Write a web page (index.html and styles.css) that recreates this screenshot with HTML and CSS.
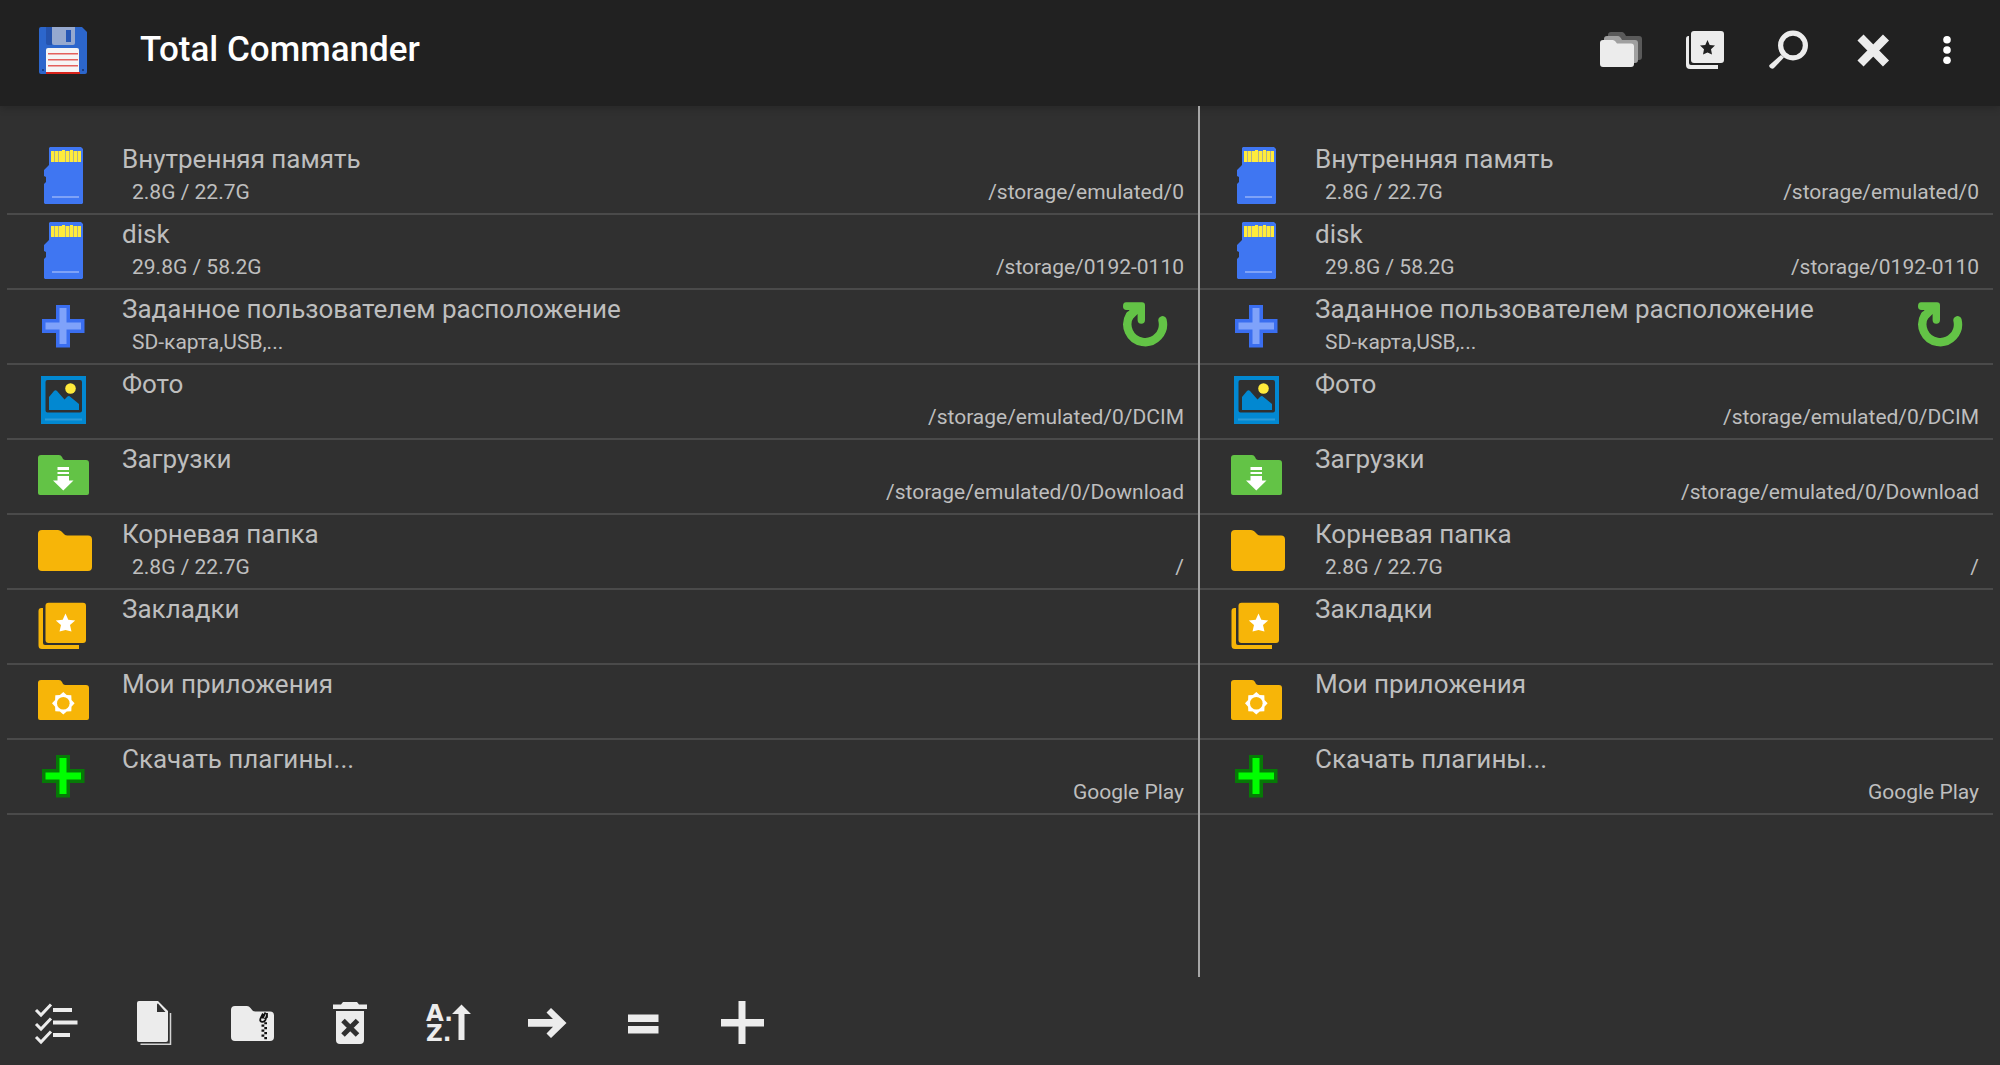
FILE: index.html
```html
<!DOCTYPE html>
<html lang="ru">
<head>
<meta charset="utf-8">
<meta name="viewport" content="width=device-width, initial-scale=1">
<title>Total Commander</title>
<link rel="stylesheet" href="styles.css">
</head>
<body>
<svg class="sprite" aria-hidden="true">
  <symbol id="i-sd" viewBox="0 0 60 73">
    <path fill="#3f76f2" d="M16 8l1-1h31l2 2v54l-1 1H12l-1-1V44l2-2v-5l-2-1v-6l5-5z"/>
    <path fill="#ffeb3b" d="M18 11h3v11h-3zM22 11h3v11h-3zM26 11h3v11h-3zM29 10h3v12h-3zM33 11h3v11h-3zM37 10h3v12h-3zM41 11h3v11h-3zM45 11h3v11h-3z"/>
    <path fill="#b2b38a" d="M21 11h1v11h-1zM25 11h1v11h-1zM32 11h1v11h-1zM36 11h1v11h-1zM40 11h1v11h-1zM44 11h1v11h-1z"/>
    <path fill="#7ea2f7" d="M19 56h27v2H19z"/>
  </symbol>
  <symbol id="i-plus" viewBox="0 0 60 73">
    <path fill="#3a6ef0" d="M23 15h14v14h14.500v14H37v14.500H23V43H9V29h14z"/>
    <path fill="#7fa2fa" d="M26.500 18h7v14.500H48v7H33.500V54h-7V39.500H12.500v-7h14z"/>
  </symbol>
  <symbol id="i-plugin" viewBox="0 0 60 73">
    <path fill="#067a06" d="M23 15h14v14h14.500v14H37v14.500H23V43H9V29h14z"/>
    <path fill="#00ff00" d="M26.500 18h7v14.500H48v7H33.500V54h-7V39.500H12.500v-7h14z"/>
  </symbol>
  <symbol id="i-photo" viewBox="0 0 60 73">
    <path fill="#0288d1" fill-rule="evenodd" d="M8 11h45v48H8zM14.500 15a2 2 0 0 0-2 2v28.500a2 2 0 0 0 2 2H47a2 2 0 0 0 2-2V17a2 2 0 0 0-2-2z"/>
    <path fill="#0288d1" d="M16 32l5-6q1.500-1.500 3 0l7.500 8.500 3-3q1.500-1 3 .5L46 39v6H16z"/>
    <circle cx="37.500" cy="23.500" r="5.300" fill="#ffeb3b"/>
    <path fill="#2d9bd8" d="M12 53.500h37v2H12z"/>
  </symbol>
  <symbol id="i-download" viewBox="0 0 60 73">
    <path fill="#63c346" d="M8 15h18q2 0 3 2l1 2q1 1 2.500 1H53q3 0 3 3v30q0 2-2 2H7q-2 0-2-2V18q0-3 3-3z"/>
    <path fill="#fff" d="M24.500 27H36v3H24.500zM24.500 32H36v2H24.500zM24.500 36H36v4.500h4.500L30.300 50.500 20 40.500h4.500z"/>
  </symbol>
  <symbol id="i-folder" viewBox="0 0 60 73">
    <path fill="#f7b508" d="M9 15h16q2 0 3.500 1.500l3 3q1 1 3 1H55q4 0 4 4V52q0 4-4 4H9q-4 0-4-4V19q0-4 4-4z"/>
  </symbol>
  <symbol id="i-marks" viewBox="0 0 60 73">
    <rect x="12.500" y="12.700" width="40.500" height="40.300" rx="3" fill="#f7b508"/>
    <path fill="#f7b508" d="M8.500 18H10v35q0 2 2 2h34v4H9q-3.500 0-3.500-3.500V21q0-3 3-3z"/>
    <path fill="#fff" d="M32.500 23.500l2.800 6.200 6.900.7-5.200 4.500 1.500 6.600-6-1.500-6 1.500 1.500-6.600-5.200-4.500 6.900-.7z"/>
  </symbol>
  <symbol id="i-apps" viewBox="0 0 60 73">
    <path fill="#f7b508" d="M8 15h18q2 0 3 2l1 2q1 1 2.500 1H53q3 0 3 3v30q0 2-2 2H7q-2 0-2-2V18q0-3 3-3z"/>
    <g transform="translate(30.300 38.300)">
      <path fill="#fff" d="M0-11.300L3.400-8.200 8-8 8.200-3.400 11.300 0 8.200 3.400 8 8 3.400 8.200 0 11.300-3.400 8.200-8 8-8.200 3.400-11.300 0-8.200-3.400-8-8-3.400-8.200z"/>
      <circle r="6.300" fill="#f7b508"/>
    </g>
  </symbol>
  <symbol id="i-refresh" viewBox="0 0 48 73">
    <path fill="none" stroke="#63c346" stroke-width="8.400" stroke-linecap="round" d="M41.500 30.300A17.800 17.800 0 1 1 9 25"/>
    <path fill="#63c346" d="M5 12.300h16q3 0 3 3V30q0 3.700-3.700 3.700T16.600 30v-6l-6 6-6.500-2.500L8.500 20H5.500Q2 20 2 16.200T5 12.300z"/>
  </symbol>
</svg>

<header class="topbar">
  <svg class="logo" viewBox="0 0 48 48" aria-hidden="true">
    <path fill="#2c66cc" d="M2 0h41l5 5v40q0 2-2 2H2q-2 0-2-2V2q0-2 2-2z"/>
    <path fill="#2553ad" d="M7 0h6v18H9q-2 0-2-2z"/>
    <path fill="#96a9cf" d="M13 0h23v16q0 2-2 2H15q-2 0-2-2z"/>
    <path fill="#2757b5" d="M27 3h5v12h-5z"/>
    <path fill="#f5f5f5" d="M9 21h29q2 0 2 2v22H7V23q0-2 2-2z"/>
    <path fill="#e4605c" d="M9 26h30v1.500H9zM9 32h30v1.500H9zM9 38h30v1.500H9z"/>
    <path fill="#d8241c" d="M7 45h34v2H7z"/>
    <path fill="#1d3f86" d="M3 42h2v2H3zM43 42h2v2h-2z"/>
  </svg>
  <h1 class="title">Total Commander</h1>
  <nav class="actions">
    <button class="tool" aria-label="Папки"><svg viewBox="0 0 48 48">
      <path fill="#5a5a5a" d="M14 6h11q2 0 4 4h13q3 0 3 3v18q0 3-3 3H11V9q0-3 3-3z"/>
      <path fill="#a0a0a0" d="M10 10h11q2 0 4 4h13q3 0 3 3v17q0 3-3 3H7V13q0-3 3-3z"/>
      <path fill="#ececec" d="M6 14h10q2 0 4 3.500h14q3 0 3 3V38q0 3-3 3H6q-3 0-3-3V17q0-3 3-3z"/></svg></button>
    <button class="tool" aria-label="Закладки"><svg viewBox="0 0 48 48">
      <path fill="#ececec" fill-rule="evenodd" d="M13 5h27q3 0 3 3v26q0 3-3 3H13q-3 0-3-3V8q0-3 3-3zM26.500 14l-2.200 5-5.300.6 4 3.600-1 5.300 4.500-2 4.500 2-1-5.300 4-3.600-5.300-.6z"/>
      <path fill="#ececec" d="M7.500 10H8v27q0 2 2 2h27v4H9q-4 0-4-4V13q0-3 2.500-3z"/></svg></button>
    <button class="tool" aria-label="Поиск"><svg viewBox="0 0 48 48">
      <circle cx="28" cy="19.500" r="12.400" fill="none" stroke="#ececec" stroke-width="5.200"/>
      <path fill="#ececec" d="M16 29l3 2.500L9 42q-1.500 1.500-3.500 0T4.500 39z"/></svg></button>
    <button class="tool" aria-label="Закрыть"><svg viewBox="0 0 48 48">
      <path stroke="#ececec" stroke-width="8.500" d="M11.500 11.500l25.500 26M37 11.500L11.500 37.500"/></svg></button>
    <button class="tool tool-more" aria-label="Меню"><svg viewBox="0 0 48 48">
      <g fill="#fff"><circle cx="24" cy="13.700" r="3.800"/><circle cx="24" cy="24" r="3.800"/><circle cx="24" cy="34.300" r="3.800"/></g></svg></button>
  </nav>
</header>

<main class="panes">
  <ul class="pane pane-left">
    <li class="row"><a class="entry" href="#"><svg class="icon"><use href="#i-sd"/></svg><span class="info"><span class="name">Внутренняя память</span><span class="meta"><span class="size">2.8G / 22.7G</span><span>/storage/emulated/0</span></span></span></a></li>
    <li class="row"><a class="entry" href="#"><svg class="icon"><use href="#i-sd"/></svg><span class="info"><span class="name">disk</span><span class="meta"><span class="size">29.8G / 58.2G</span><span>/storage/0192-0110</span></span></span></a></li>
    <li class="row"><a class="entry" href="#"><svg class="icon"><use href="#i-plus"/></svg><span class="info"><span class="name">Заданное пользователем расположение</span><span class="meta"><span class="size">SD-карта,USB,...</span></span></span></a><button class="refresh" aria-label="Обновить"><svg><use href="#i-refresh"/></svg></button></li>
    <li class="row"><a class="entry" href="#"><svg class="icon"><use href="#i-photo"/></svg><span class="info"><span class="name">Фото</span><span class="meta"><span class="size"></span><span>/storage/emulated/0/DCIM</span></span></span></a></li>
    <li class="row"><a class="entry" href="#"><svg class="icon"><use href="#i-download"/></svg><span class="info"><span class="name">Загрузки</span><span class="meta"><span class="size"></span><span>/storage/emulated/0/Download</span></span></span></a></li>
    <li class="row"><a class="entry" href="#"><svg class="icon"><use href="#i-folder"/></svg><span class="info"><span class="name">Корневая папка</span><span class="meta"><span class="size">2.8G / 22.7G</span><span>/</span></span></span></a></li>
    <li class="row"><a class="entry" href="#"><svg class="icon"><use href="#i-marks"/></svg><span class="info"><span class="name">Закладки</span></span></a></li>
    <li class="row"><a class="entry" href="#"><svg class="icon"><use href="#i-apps"/></svg><span class="info"><span class="name">Мои приложения</span></span></a></li>
    <li class="row"><a class="entry" href="#"><svg class="icon"><use href="#i-plugin"/></svg><span class="info"><span class="name">Скачать плагины...</span><span class="meta"><span class="size"></span><span>Google Play</span></span></span></a></li>
  </ul>
  <ul class="pane pane-right">
    <li class="row"><a class="entry" href="#"><svg class="icon"><use href="#i-sd"/></svg><span class="info"><span class="name">Внутренняя память</span><span class="meta"><span class="size">2.8G / 22.7G</span><span>/storage/emulated/0</span></span></span></a></li>
    <li class="row"><a class="entry" href="#"><svg class="icon"><use href="#i-sd"/></svg><span class="info"><span class="name">disk</span><span class="meta"><span class="size">29.8G / 58.2G</span><span>/storage/0192-0110</span></span></span></a></li>
    <li class="row"><a class="entry" href="#"><svg class="icon"><use href="#i-plus"/></svg><span class="info"><span class="name">Заданное пользователем расположение</span><span class="meta"><span class="size">SD-карта,USB,...</span></span></span></a><button class="refresh" aria-label="Обновить"><svg><use href="#i-refresh"/></svg></button></li>
    <li class="row"><a class="entry" href="#"><svg class="icon"><use href="#i-photo"/></svg><span class="info"><span class="name">Фото</span><span class="meta"><span class="size"></span><span>/storage/emulated/0/DCIM</span></span></span></a></li>
    <li class="row"><a class="entry" href="#"><svg class="icon"><use href="#i-download"/></svg><span class="info"><span class="name">Загрузки</span><span class="meta"><span class="size"></span><span>/storage/emulated/0/Download</span></span></span></a></li>
    <li class="row"><a class="entry" href="#"><svg class="icon"><use href="#i-folder"/></svg><span class="info"><span class="name">Корневая папка</span><span class="meta"><span class="size">2.8G / 22.7G</span><span>/</span></span></span></a></li>
    <li class="row"><a class="entry" href="#"><svg class="icon"><use href="#i-marks"/></svg><span class="info"><span class="name">Закладки</span></span></a></li>
    <li class="row"><a class="entry" href="#"><svg class="icon"><use href="#i-apps"/></svg><span class="info"><span class="name">Мои приложения</span></span></a></li>
    <li class="row"><a class="entry" href="#"><svg class="icon"><use href="#i-plugin"/></svg><span class="info"><span class="name">Скачать плагины...</span><span class="meta"><span class="size"></span><span>Google Play</span></span></span></a></li>
  </ul>
</main>

<footer class="bottombar">
  <button class="key" aria-label="Выделить"><svg viewBox="0 0 48 48">
    <path fill="none" stroke="#ececec" stroke-width="3" d="M4 11l5 5L19 5.500M4 25l5 5 10-10.500M4 38l5 5 10-10.500"/>
    <path fill="#ececec" d="M21 9h19v4H21zM21 21.500h24.500v4H21zM21 34h17v4H21z"/></svg></button>
  <button class="key" aria-label="Копировать"><svg viewBox="0 0 48 48">
    <path fill="#ececec" fill-rule="evenodd" d="M9 2h19l10 10v29q0 2-2 2H9q-2 0-2-2V4q0-2 2-2zM28 4.500q-1 0-1 1V13h8.500z"/>
    <path fill="none" stroke="#d4d4d4" stroke-width="1.500" d="M40.500 14v31.200H10.500"/></svg></button>
  <button class="key" aria-label="Упаковать"><svg viewBox="0 0 48 48">
    <path fill="#ececec" d="M7 7h12q2 0 3.500 2l2 2.500q1 1 3 1H42q4 0 4 4V38q0 4-4 4H7q-4 0-4-4V11q0-4 4-4z"/>
    <path fill="none" stroke="#111" stroke-width="1.800" d="M35 14.500l-2.500 5q-1 3 1.500 3.300t3.500-2l1.500-5M37.500 13.500l-3 6M39 14v4l-2.500 2"/>
    <path fill="#111" d="M36.300 23.300h2.700v2h-2.700zM33.500 25.500h2.800v2.200h-2.800zM36.300 28h2.700v2.200h-2.700zM33.500 30.500h2.800v2.200h-2.800zM36.300 33h2.700v2.200h-2.700zM33.500 35.500h2.800v2.200h-2.800zM36.300 38h2.700v2.200h-2.700z"/></svg></button>
  <button class="key" aria-label="Удалить"><svg viewBox="0 0 48 48">
    <path fill="#ececec" d="M7 5.500h8l2-2.500h14l2 2.500h8V10H7z"/>
    <path fill="#ececec" d="M10 12h28v29q0 4-4 4H14q-4 0-4-4z"/>
    <path stroke="#303030" stroke-width="5" d="M17 21.500l14.500 14.500M31.500 21.500L17 36"/></svg></button>
  <button class="key" aria-label="Сортировка"><svg viewBox="0 0 48 48">
    <text class="sort-letter" x="2" y="22">A.</text>
    <text class="sort-letter" x="2" y="42">Z.</text>
    <path fill="#ececec" d="M37.500 5.500L47 15h-6.500v26h-6V15H28z"/></svg></button>
  <button class="key" aria-label="Вперёд"><svg viewBox="0 0 48 48">
    <path fill="#ececec" d="M6 20h25l-6.500-6.500L29 9l15.500 15L29 39l-4.500-4.500 6.500-6.800H6z"/></svg></button>
  <button class="key" aria-label="Равно"><svg viewBox="0 0 48 48">
    <path fill="#ececec" d="M8 15.500h30.500V23H8zM8 27h30.500v7.500H8z"/></svg></button>
  <button class="key" aria-label="Добавить"><svg viewBox="0 0 48 48">
    <path fill="#ececec" d="M20.500 2h7v18H46v7.500H27.500V45h-7V27.500H3V20h17.500z"/></svg></button>
</footer>
</body>
</html>
```
FILE: styles.css
```css
* {
  box-sizing: border-box;
}

body {
  margin: 0;
  min-height: 100vh;
  display: flex;
  flex-direction: column;
  background: #303030;
  color: #bebebe;
  font-family: Roboto, "Noto Sans", sans-serif;
}

button {
  border: 0;
  padding: 0;
  background: none;
  color: inherit;
  font: inherit;
  cursor: pointer;
}

.sprite {
  display: none;
}

.topbar {
  display: flex;
  align-items: center;
  height: 106px;
  padding: 0 21px 6px 39px;
  background: #212121;
  box-shadow: 0 2px 8px rgba(0, 0, 0, 0.2);
}

.logo {
  width: 48px;
  height: 48px;
  margin-top: 2px;
  margin-right: 53px;
}

.title {
  flex: 1;
  margin: 0;
  color: #fff;
  font-size: 35px;
  font-weight: 500;
  line-height: 40px;
}

.actions {
  display: flex;
}

.tool {
  width: 84px;
  height: 84px;
}

.tool-more {
  width: 64px;
}

.tool svg,
.key svg {
  display: block;
  width: 48px;
  height: 48px;
  margin: 0 auto;
}

.panes {
  flex: 1;
  display: grid;
  grid-template-columns: 3fr 2fr;
}

.pane {
  min-width: 0;
  margin: 0;
  padding: 34px 0 0;
  list-style: none;
}

.pane-left {
  padding-left: 7px;
  border-right: 2px solid #a6a6a6;
}

.pane-right {
  padding-right: 7px;
}

.row {
  display: flex;
  height: 75px;
  border-bottom: 2px solid #4a4a4a;
}

.entry {
  flex: 1;
  min-width: 0;
  display: flex;
  padding: 0 14px 0 26px;
  color: inherit;
  text-decoration: none;
}

.icon {
  flex: none;
  width: 60px;
  height: 73px;
}

.info {
  flex: 1;
  min-width: 0;
  padding: 3px 0 0 29px;
}

.name {
  display: block;
  font-size: 26px;
  line-height: 32px;
  white-space: nowrap;
}

.meta {
  display: flex;
  justify-content: space-between;
  font-size: 21px;
  line-height: 34px;
  white-space: nowrap;
}

.size {
  padding-left: 10px;
}

.refresh {
  width: 48px;
  margin-right: 29px;
}

.refresh svg {
  display: block;
  width: 48px;
  height: 73px;
}

.bottombar {
  display: flex;
  align-items: center;
  height: 88px;
  padding: 4px 7px 0;
}

.key {
  width: 98px;
  height: 84px;
}

.sort-letter {
  fill: #ececec;
  font-family: "DejaVu Sans", sans-serif;
  font-size: 23px;
  font-weight: 700;
}
```
